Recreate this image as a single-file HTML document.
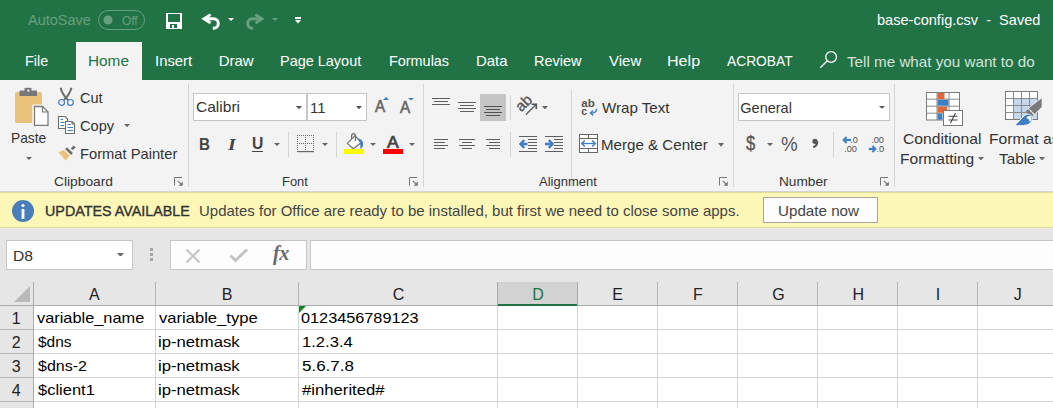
<!DOCTYPE html>
<html><head><meta charset="utf-8"><style>
html,body{margin:0;padding:0;width:1053px;height:408px;overflow:hidden;background:#e6e6e6;position:relative}
body>div,body>svg{position:absolute;white-space:pre;transform-origin:0 0}
body{font-family:"Liberation Sans",sans-serif}
</style></head><body>
<div style="left:0px;top:0px;width:1053px;height:80px;background:#217346;"></div>
<div style="left:76px;top:42px;width:66px;height:38px;background:#f3f3f3;"></div>
<div style="left:0px;top:80px;width:1053px;height:111px;background:#f3f3f3;"></div>
<div style="left:0px;top:191px;width:1053px;height:1px;background:#d4d4d4;"></div>
<div style="left:0px;top:192px;width:1053px;height:1px;background:#e3dc98;"></div>
<div style="left:0px;top:193px;width:1053px;height:34px;background:#fcf7b6;"></div>
<div style="left:0px;top:227px;width:1053px;height:1px;background:#e3dc98;"></div>
<div style="left:0px;top:228px;width:1053px;height:180px;background:#e6e6e6;"></div>
<div style="left:98px;top:10px;width:47px;height:20px;box-sizing:border-box;border:1px solid #66a07e;background:transparent;border-radius:10px"></div>
<svg style="left:103px;top:15px;" width="10" height="10" viewBox="0 0 10 10"><circle cx="5" cy="5" r="4.5" fill="#66a07e"/></svg>
<svg style="left:166px;top:13px;" width="16" height="16" viewBox="0 0 16 16"><rect x="0" y="0" width="16" height="16" fill="#fff"/><rect x="2" y="1" width="12" height="8" fill="#217346"/><rect x="4" y="11" width="7" height="4" fill="#217346"/><rect x="6" y="12" width="2" height="3" fill="#fff"/><rect x="0" y="15" width="16" height="1" fill="#fff"/></svg>
<svg style="left:200px;top:12px;" width="22" height="18" viewBox="0 0 22 18"><path d="M4 6.8H13.6A4.7 4.7 0 0 1 13.6 16.2H12.8" fill="none" stroke="#fff" stroke-width="3"/><path d="M10.6 2.6L3.9 6.8L10.6 11" fill="none" stroke="#fff" stroke-width="2.8"/></svg>
<svg style="left:228px;top:18px;" width="6" height="3" viewBox="0 0 6 3"><path d="M0 0H6L3.0 3Z" fill="#fff"/></svg>
<svg style="left:244px;top:12px;" width="22" height="18" viewBox="0 0 22 18"><path d="M18 6.8H8.4A4.7 4.7 0 0 0 8.4 16.2H9.2" fill="none" stroke="#66a07e" stroke-width="3"/><path d="M11.4 2.6L18.1 6.8L11.4 11" fill="none" stroke="#66a07e" stroke-width="2.8"/></svg>
<svg style="left:272px;top:18px;" width="6" height="3" viewBox="0 0 6 3"><path d="M0 0H6L3.0 3Z" fill="#66a07e"/></svg>
<div style="left:295px;top:17px;width:6px;height:1.5px;background:#fff;"></div>
<svg style="left:295px;top:20px;" width="6" height="3.5" viewBox="0 0 6 3.5"><path d="M0 0H6L3.0 3.5Z" fill="#fff"/></svg>
<svg style="left:818px;top:50px;" width="21" height="20" viewBox="0 0 21 20"><circle cx="13.1" cy="7" r="5.4" fill="none" stroke="#fff" stroke-width="1.3"/><path d="M9.3 10.8L2.3 17.8" stroke="#fff" stroke-width="1.3"/></svg>
<svg style="left:13px;top:86px;" width="40" height="42" viewBox="0 0 40 42"><rect x="2" y="6" width="27" height="31" rx="1.5" fill="#eac27b"/><rect x="6.5" y="4.5" width="17.5" height="5.5" fill="#787878"/><rect x="11.5" y="1.8" width="7" height="4" fill="#787878"/><rect x="14.3" y="3.6" width="2" height="2" fill="#f3f3f3"/><path d="M20 19.3H29.7L36.2 25.8V40.3H20Z" fill="#fff" stroke="#f3f3f3" stroke-width="1.5"/><path d="M21.5 20.5H29.5L35 26V39.3H21.5Z" fill="#fff" stroke="#7a7a7a" stroke-width="1.3"/><path d="M29.5 20.5V26H35" fill="none" stroke="#7a7a7a" stroke-width="1.1"/></svg>
<svg style="left:26px;top:156.5px;" width="6" height="3.0" viewBox="0 0 6 3.0"><path d="M0 0H6L3.0 3.0Z" fill="#666"/></svg>
<svg style="left:58px;top:86px;" width="16" height="21" viewBox="0 0 16 21"><path d="M2.6 1.8C3.6 6.5 6 10.2 10.6 14.6" stroke="#6d6d6d" stroke-width="2" fill="none"/><path d="M13.4 1.8C12.4 6.5 10 10.2 5.4 14.6" stroke="#6d6d6d" stroke-width="2" fill="none"/><circle cx="3.6" cy="16.4" r="2.9" fill="#f3f3f3" stroke="#3f7fc4" stroke-width="1.2"/><circle cx="12.4" cy="16.4" r="2.9" fill="#f3f3f3" stroke="#3f7fc4" stroke-width="1.2"/></svg>
<svg style="left:57px;top:115px;" width="20" height="20" viewBox="0 0 20 20"><path d="M1.5 1.5H8L10.5 4V13.5H1.5Z" fill="#fff" stroke="#6d6d6d" stroke-width="1.1"/><path d="M3.5 4.5H6M3.5 7.5H7.5M3.5 10.5H7" stroke="#3f7fc4" stroke-width="1.1"/><path d="M8.5 6.5H15L17.5 9V18.5H8.5Z" fill="#fff" stroke="#6d6d6d" stroke-width="1.1"/><path d="M15 6.5V9H17.5" fill="none" stroke="#6d6d6d" stroke-width="1"/><path d="M10.5 9.5H13.5M10.5 12.5H16M10.5 15.5H16" stroke="#3f7fc4" stroke-width="1.1"/></svg>
<svg style="left:124px;top:124.2px;" width="6" height="3.200000000000003" viewBox="0 0 6 3.200000000000003"><path d="M0 0H6L3.0 3.200000000000003Z" fill="#666"/></svg>
<svg style="left:57px;top:144px;" width="20" height="17" viewBox="0 0 20 17"><path d="M1.4 8.3L6.8 6.1L13 11.7L8.5 16.4Z" fill="#eac27b"/><path d="M8 5.1L10.3 3.4L15.9 9L14.2 10.9Z" fill="#6d6d6d"/><path d="M13.8 4.4L16.4 1.6L18.8 3.6L15.6 6Z" fill="#6d6d6d"/></svg>
<svg style="left:174px;top:177px;" width="10" height="9" viewBox="0 0 10 9"><path d="M0.5 8.5V0.5H8" fill="none" stroke="#777" stroke-width="1"/><path d="M3.8 3.8L7.5 7.5" stroke="#777" stroke-width="1.1"/><path d="M8.8 4.6V8.8H4.6Z" fill="#777"/></svg>
<div style="left:188px;top:84px;width:1px;height:103px;background:#d5d5d5;"></div>
<div style="left:193px;top:93px;width:114px;height:28px;box-sizing:border-box;border:1px solid #c6c6c6;background:#fff;"></div>
<div style="left:307px;top:93px;width:60px;height:28px;box-sizing:border-box;border:1px solid #c6c6c6;background:#fff;"></div>
<svg style="left:296px;top:105.8px;" width="6" height="3.299999999999997" viewBox="0 0 6 3.299999999999997"><path d="M0 0H6L3.0 3.299999999999997Z" fill="#555"/></svg>
<svg style="left:356px;top:106px;" width="6" height="3.299999999999997" viewBox="0 0 6 3.299999999999997"><path d="M0 0H6L3.0 3.299999999999997Z" fill="#555"/></svg>
<svg style="left:383px;top:97px;" width="6" height="3" viewBox="0 0 6 3"><path d="M0 3H6L3 0Z" fill="#3f7fc4"/></svg>
<svg style="left:408px;top:98.2px;" width="6" height="2.5" viewBox="0 0 6 2.5"><path d="M0 0H6L3.0 2.5Z" fill="#3f7fc4"/></svg>
<div style="left:252px;top:151px;width:10.5px;height:1.2px;background:#444;"></div>
<svg style="left:274px;top:143.2px;" width="6" height="3.1000000000000227" viewBox="0 0 6 3.1000000000000227"><path d="M0 0H6L3.0 3.1000000000000227Z" fill="#666"/></svg>
<div style="left:288px;top:132px;width:1px;height:25px;background:#d5d5d5;"></div>
<svg style="left:297px;top:135px;" width="17" height="18" viewBox="0 0 17 18"><rect x="0" y="0.0" width="1" height="1" fill="#666"/><rect x="2" y="0.0" width="1" height="1" fill="#666"/><rect x="4" y="0.0" width="1" height="1" fill="#666"/><rect x="6" y="0.0" width="1" height="1" fill="#666"/><rect x="8" y="0.0" width="1" height="1" fill="#666"/><rect x="10" y="0.0" width="1" height="1" fill="#666"/><rect x="12" y="0.0" width="1" height="1" fill="#666"/><rect x="14" y="0.0" width="1" height="1" fill="#666"/><rect x="16" y="0.0" width="1" height="1" fill="#666"/><rect x="0" y="8.0" width="1" height="1" fill="#666"/><rect x="2" y="8.0" width="1" height="1" fill="#666"/><rect x="4" y="8.0" width="1" height="1" fill="#666"/><rect x="6" y="8.0" width="1" height="1" fill="#666"/><rect x="8" y="8.0" width="1" height="1" fill="#666"/><rect x="10" y="8.0" width="1" height="1" fill="#666"/><rect x="12" y="8.0" width="1" height="1" fill="#666"/><rect x="14" y="8.0" width="1" height="1" fill="#666"/><rect x="16" y="8.0" width="1" height="1" fill="#666"/><rect x="0.0" y="0" width="1" height="1" fill="#666"/><rect x="0.0" y="2" width="1" height="1" fill="#666"/><rect x="0.0" y="4" width="1" height="1" fill="#666"/><rect x="0.0" y="6" width="1" height="1" fill="#666"/><rect x="0.0" y="8" width="1" height="1" fill="#666"/><rect x="0.0" y="10" width="1" height="1" fill="#666"/><rect x="0.0" y="12" width="1" height="1" fill="#666"/><rect x="0.0" y="14" width="1" height="1" fill="#666"/><rect x="8.0" y="0" width="1" height="1" fill="#666"/><rect x="8.0" y="2" width="1" height="1" fill="#666"/><rect x="8.0" y="4" width="1" height="1" fill="#666"/><rect x="8.0" y="6" width="1" height="1" fill="#666"/><rect x="8.0" y="8" width="1" height="1" fill="#666"/><rect x="8.0" y="10" width="1" height="1" fill="#666"/><rect x="8.0" y="12" width="1" height="1" fill="#666"/><rect x="8.0" y="14" width="1" height="1" fill="#666"/><rect x="16.0" y="0" width="1" height="1" fill="#666"/><rect x="16.0" y="2" width="1" height="1" fill="#666"/><rect x="16.0" y="4" width="1" height="1" fill="#666"/><rect x="16.0" y="6" width="1" height="1" fill="#666"/><rect x="16.0" y="8" width="1" height="1" fill="#666"/><rect x="16.0" y="10" width="1" height="1" fill="#666"/><rect x="16.0" y="12" width="1" height="1" fill="#666"/><rect x="16.0" y="14" width="1" height="1" fill="#666"/><rect x="0" y="16" width="17" height="1.2" fill="#666"/></svg>
<svg style="left:322px;top:142.8px;" width="6" height="3.0999999999999943" viewBox="0 0 6 3.0999999999999943"><path d="M0 0H6L3.0 3.0999999999999943Z" fill="#666"/></svg>
<div style="left:336px;top:132px;width:1px;height:25px;background:#d5d5d5;"></div>
<svg style="left:344px;top:133px;" width="21" height="22" viewBox="0 0 21 22"><path d="M3.3 10.4L11 2.7L17 9.7L9.4 15.8Z" fill="#fff" stroke="#6d6d6d" stroke-width="1.2" stroke-linejoin="round"/><path d="M7.6 6V2.6A1.9 1.9 0 0 1 11.4 2.6V8" fill="none" stroke="#6d6d6d" stroke-width="1.2"/><path d="M13.6 5.6C18 5.8 19.6 9.2 19 12.4C18.6 14.2 17.6 15.2 16.4 15.8C16.6 12.4 16.4 8.4 13.6 5.6Z" fill="#3f7fc4"/><rect x="0" y="16" width="20" height="5" fill="#ffff00"/></svg>
<svg style="left:370px;top:143px;" width="6" height="3" viewBox="0 0 6 3"><path d="M0 0H6L3.0 3Z" fill="#666"/></svg>
<div style="left:383px;top:149px;width:20px;height:5px;background:#ff0000;"></div>
<svg style="left:409px;top:143px;" width="6" height="3" viewBox="0 0 6 3"><path d="M0 0H6L3.0 3Z" fill="#666"/></svg>
<svg style="left:409px;top:177px;" width="10" height="9" viewBox="0 0 10 9"><path d="M0.5 8.5V0.5H8" fill="none" stroke="#777" stroke-width="1"/><path d="M3.8 3.8L7.5 7.5" stroke="#777" stroke-width="1.1"/><path d="M8.8 4.6V8.8H4.6Z" fill="#777"/></svg>
<div style="left:423px;top:84px;width:1px;height:103px;background:#d5d5d5;"></div>
<div style="left:432px;top:98px;width:18px;height:1px;background:#5f5f5f;"></div>
<div style="left:434px;top:101px;width:14px;height:1px;background:#5f5f5f;"></div>
<div style="left:432px;top:104px;width:18px;height:1px;background:#5f5f5f;"></div>
<div style="left:458px;top:102px;width:18px;height:1px;background:#5f5f5f;"></div>
<div style="left:460px;top:105px;width:14px;height:1px;background:#5f5f5f;"></div>
<div style="left:458px;top:108px;width:18px;height:1px;background:#5f5f5f;"></div>
<div style="left:460px;top:111px;width:14px;height:1px;background:#5f5f5f;"></div>
<div style="left:480px;top:94px;width:26px;height:27px;background:#c5c5c5;"></div>
<div style="left:484px;top:106px;width:18px;height:1px;background:#505050;"></div>
<div style="left:486px;top:109px;width:14px;height:1px;background:#505050;"></div>
<div style="left:484px;top:112px;width:18px;height:1px;background:#505050;"></div>
<div style="left:486px;top:115px;width:14px;height:1px;background:#505050;"></div>
<div style="left:510px;top:95px;width:1px;height:25px;background:#d5d5d5;"></div>
<svg style="left:516px;top:96px;" width="24" height="21" viewBox="0 0 24 21"><text x="0" y="0" transform="translate(5.3 16.6) rotate(-45)" font-family="Liberation Sans" font-size="15" font-weight="400" fill="#555" stroke="#555" stroke-width="0.35">ab</text><path d="M10 18.5L20 8.5" stroke="#555" stroke-width="1.3"/><path d="M15.5 8.2H20.3V13" fill="none" stroke="#555" stroke-width="1.6"/></svg>
<svg style="left:542px;top:105.6px;" width="6" height="3.6000000000000085" viewBox="0 0 6 3.6000000000000085"><path d="M0 0H6L3.0 3.6000000000000085Z" fill="#666"/></svg>
<div style="left:571px;top:90px;width:1px;height:97px;background:#d5d5d5;"></div>
<svg style="left:580px;top:98px;" width="20" height="20" viewBox="0 0 20 20"><text x="1.3" y="8.6" font-family="Liberation Sans" font-weight="700" font-size="10.5" fill="#555" textLength="13.5" lengthAdjust="spacingAndGlyphs">ab</text><text x="1.3" y="16.8" font-family="Liberation Sans" font-weight="700" font-size="10.5" fill="#555">c</text><path d="M16.6 10.8C16.8 13.6 14.8 15 10.8 15" fill="none" stroke="#3f7fc4" stroke-width="1.4"/><path d="M13.2 12.4L10.4 15L13.2 17.6" fill="none" stroke="#3f7fc4" stroke-width="1.4"/></svg>
<div style="left:434px;top:139px;width:14px;height:1px;background:#5f5f5f;"></div>
<div style="left:434px;top:142px;width:11px;height:1px;background:#5f5f5f;"></div>
<div style="left:434px;top:145px;width:14px;height:1px;background:#5f5f5f;"></div>
<div style="left:434px;top:148px;width:11px;height:1px;background:#5f5f5f;"></div>
<div style="left:459px;top:139px;width:16px;height:1px;background:#5f5f5f;"></div>
<div style="left:462px;top:142px;width:10px;height:1px;background:#5f5f5f;"></div>
<div style="left:459px;top:145px;width:16px;height:1px;background:#5f5f5f;"></div>
<div style="left:462px;top:148px;width:10px;height:1px;background:#5f5f5f;"></div>
<div style="left:486px;top:139px;width:14px;height:1px;background:#5f5f5f;"></div>
<div style="left:489px;top:142px;width:11px;height:1px;background:#5f5f5f;"></div>
<div style="left:486px;top:145px;width:14px;height:1px;background:#5f5f5f;"></div>
<div style="left:489px;top:148px;width:11px;height:1px;background:#5f5f5f;"></div>
<div style="left:510px;top:132px;width:1px;height:25px;background:#d5d5d5;"></div>
<div style="left:519px;top:136px;width:18px;height:1px;background:#5f5f5f;"></div>
<div style="left:528px;top:139px;width:9px;height:1px;background:#5f5f5f;"></div>
<div style="left:528px;top:142px;width:9px;height:1px;background:#5f5f5f;"></div>
<div style="left:528px;top:145px;width:9px;height:1px;background:#5f5f5f;"></div>
<div style="left:528px;top:148px;width:9px;height:1px;background:#5f5f5f;"></div>
<div style="left:519px;top:151px;width:18px;height:1px;background:#5f5f5f;"></div>
<div style="left:545px;top:136px;width:18px;height:1px;background:#5f5f5f;"></div>
<div style="left:554px;top:139px;width:9px;height:1px;background:#5f5f5f;"></div>
<div style="left:554px;top:142px;width:9px;height:1px;background:#5f5f5f;"></div>
<div style="left:554px;top:145px;width:9px;height:1px;background:#5f5f5f;"></div>
<div style="left:554px;top:148px;width:9px;height:1px;background:#5f5f5f;"></div>
<div style="left:545px;top:151px;width:18px;height:1px;background:#5f5f5f;"></div>
<svg style="left:519px;top:139px;" width="9" height="10" viewBox="0 0 9 10"><path d="M8.5 5H3" stroke="#3f7fc4" stroke-width="2.6"/><path d="M5.2 1.2L1.4 5L5.2 8.8" fill="none" stroke="#3f7fc4" stroke-width="2.4"/></svg>
<svg style="left:545px;top:139px;" width="10" height="10" viewBox="0 0 10 10"><path d="M0 5H6" stroke="#3f7fc4" stroke-width="2.6"/><path d="M3.8 1.2L7.6 5L3.8 8.8" fill="none" stroke="#3f7fc4" stroke-width="2.4"/></svg>
<div style="left:571px;top:132px;width:1px;height:25px;background:#d5d5d5;"></div>
<div style="left:579px;top:134px;width:19px;height:19px;box-sizing:border-box;border:1px solid #666;background:#fff;"></div>
<div style="left:579px;top:138px;width:19px;height:1px;background:#666;"></div>
<div style="left:579px;top:148px;width:19px;height:1px;background:#666;"></div>
<div style="left:588px;top:134px;width:1px;height:4px;background:#666;"></div>
<div style="left:588px;top:148px;width:1px;height:5px;background:#666;"></div>
<svg style="left:580px;top:139px;" width="17" height="9" viewBox="0 0 17 9"><path d="M2.5 4.5H14.5" stroke="#3f7fc4" stroke-width="1.3"/><path d="M4.8 1.5L1.8 4.5L4.8 7.5M12.2 1.5L15.2 4.5L12.2 7.5" fill="none" stroke="#3f7fc4" stroke-width="1.6"/></svg>
<svg style="left:718px;top:143.2px;" width="6" height="3.8000000000000114" viewBox="0 0 6 3.8000000000000114"><path d="M0 0H6L3.0 3.8000000000000114Z" fill="#666"/></svg>
<svg style="left:719px;top:177px;" width="10" height="9" viewBox="0 0 10 9"><path d="M0.5 8.5V0.5H8" fill="none" stroke="#777" stroke-width="1"/><path d="M3.8 3.8L7.5 7.5" stroke="#777" stroke-width="1.1"/><path d="M8.8 4.6V8.8H4.6Z" fill="#777"/></svg>
<div style="left:733px;top:84px;width:1px;height:103px;background:#d5d5d5;"></div>
<div style="left:738px;top:93px;width:152px;height:28px;box-sizing:border-box;border:1px solid #c6c6c6;background:#fff;"></div>
<svg style="left:879px;top:106.4px;" width="6" height="2.799999999999997" viewBox="0 0 6 2.799999999999997"><path d="M0 0H6L3.0 2.799999999999997Z" fill="#555"/></svg>
<svg style="left:767px;top:143.2px;" width="6" height="3.200000000000017" viewBox="0 0 6 3.200000000000017"><path d="M0 0H6L3.0 3.200000000000017Z" fill="#666"/></svg>
<svg style="left:810px;top:138px;" width="10" height="11" viewBox="0 0 10 11"><circle cx="5" cy="3.3" r="2.6" fill="#555"/><path d="M7.3 3.5C7.3 6.5 5.5 8.5 3.2 9.3" fill="none" stroke="#555" stroke-width="2"/></svg>
<div style="left:833px;top:132px;width:1px;height:25px;background:#d5d5d5;"></div>
<svg style="left:840px;top:133px;" width="50" height="22" viewBox="0 0 50 22"><g font-family="Liberation Sans" font-size="9.2" fill="#505050"><text x="10.2" y="10">.0</text><text x="4.2" y="19">.00</text><text x="31.2" y="10">.00</text><text x="36.4" y="19">.0</text></g><path d="M5 7H11" stroke="#3f7fc4" stroke-width="2.2"/><path d="M6.6 4L3.6 7L6.6 10" fill="none" stroke="#3f7fc4" stroke-width="2"/><path d="M28.8 16H34" stroke="#3f7fc4" stroke-width="2.2"/><path d="M32.4 13L35.4 16L32.4 19" fill="none" stroke="#3f7fc4" stroke-width="2"/></svg>
<svg style="left:880px;top:177px;" width="10" height="9" viewBox="0 0 10 9"><path d="M0.5 8.5V0.5H8" fill="none" stroke="#777" stroke-width="1"/><path d="M3.8 3.8L7.5 7.5" stroke="#777" stroke-width="1.1"/><path d="M8.8 4.6V8.8H4.6Z" fill="#777"/></svg>
<div style="left:894px;top:84px;width:1px;height:103px;background:#d5d5d5;"></div>
<svg style="left:926px;top:92px;" width="40" height="36" viewBox="0 0 40 36"><rect x="0.5" y="0.5" width="33" height="27.5" fill="#fff" stroke="#7a7a7a" stroke-width="1"/><path d="M11 0.5V28M23 0.5V28M0.5 7.2H33.5M0.5 14.2H33.5M0.5 21.2H33.5" stroke="#8a8a8a" stroke-width="1"/><rect x="11.5" y="1" width="7" height="6" fill="#e0663c"/><rect x="11.5" y="7.7" width="11" height="6" fill="#3f7fc4"/><rect x="11.5" y="14.7" width="9.5" height="6" fill="#e0663c"/><rect x="11.5" y="21.7" width="5" height="6" fill="#3f7fc4"/><rect x="17.5" y="18.5" width="19" height="15" fill="#fff" stroke="#7a7a7a" stroke-width="1"/><path d="M22.5 24.2H31.5M22.5 28H31.5M29.5 21L24.5 31" stroke="#444" stroke-width="1.1"/></svg>
<svg style="left:1005px;top:91px;" width="42" height="36" viewBox="0 0 42 36"><rect x="0.5" y="0.5" width="32" height="28" fill="#fff" stroke="#7a7a7a" stroke-width="1"/><rect x="9" y="7.5" width="23" height="20.5" fill="#c5d7ec"/><path d="M8.5 0.5V28.5M16.5 0.5V28.5M24.5 0.5V28.5M0.5 7.5H32.5M0.5 14.5H32.5M0.5 21.5H32.5" stroke="#8a8a8a" stroke-width="1"/><path d="M37.2 6V16.6L29.6 24.2L22.6 17.2Z" fill="#f3f3f3"/><path d="M36.7 7.2V16L29.6 23.1L23.8 17.3Z" fill="#7a7a7a"/><path d="M23 18.3L28.6 23.9L26.2 26.3L20.6 20.7Z" fill="#7a7a7a"/><path d="M9.6 34.6L19 25C21.5 22.5 26 22.5 27 26C28 29.5 25.5 33 21.5 34C17.5 34.8 13.5 34.7 9.6 34.6Z" fill="#3f7fc4" stroke="#f3f3f3" stroke-width="1"/><path d="M21.3 27.2C22.4 24.8 25.4 24.4 26.3 26.4C26.8 28 25.9 30.2 24.4 30.9C24.9 28.9 23.4 27.3 21.3 27.2Z" fill="#fff"/></svg>
<svg style="left:978px;top:156.8px;" width="6" height="3.3999999999999773" viewBox="0 0 6 3.3999999999999773"><path d="M0 0H6L3.0 3.3999999999999773Z" fill="#666"/></svg>
<svg style="left:1039px;top:156.8px;" width="6" height="3.3999999999999773" viewBox="0 0 6 3.3999999999999773"><path d="M0 0H6L3.0 3.3999999999999773Z" fill="#666"/></svg>
<svg style="left:12px;top:200px;" width="22" height="22" viewBox="0 0 22 22"><circle cx="11" cy="11" r="11" fill="#4a7ebb"/><rect x="9.6" y="9" width="2.8" height="10" fill="#fff"/><circle cx="11" cy="5.5" r="1.6" fill="#fff"/></svg>
<div style="left:763px;top:197px;width:115px;height:26px;box-sizing:border-box;border:1px solid #a6a6a6;background:#fdfdfd;"></div>
<div style="left:6px;top:240px;width:127px;height:30px;box-sizing:border-box;border:1px solid #c6c6c6;background:#fff;"></div>
<svg style="left:117px;top:252.6px;" width="7" height="3.799999999999983" viewBox="0 0 7 3.799999999999983"><path d="M0 0H7L3.5 3.799999999999983Z" fill="#666"/></svg>
<div style="left:150px;top:248px;width:3px;height:3px;background:#a6a6a6;"></div>
<div style="left:150px;top:253px;width:3px;height:3px;background:#a6a6a6;"></div>
<div style="left:150px;top:258px;width:3px;height:3px;background:#a6a6a6;"></div>
<div style="left:170px;top:240px;width:137px;height:30px;box-sizing:border-box;border:1px solid #c6c6c6;background:#fdfdfd;"></div>
<svg style="left:185px;top:248px;" width="16" height="16" viewBox="0 0 16 16"><path d="M1.5 1.5L14.5 14.5M14.5 1.5L1.5 14.5" stroke="#c4c4c4" stroke-width="2"/></svg>
<svg style="left:229px;top:247px;" width="20" height="17" viewBox="0 0 20 17"><path d="M1.5 8.5L6.5 13.5L18 2.5" fill="none" stroke="#c4c4c4" stroke-width="3"/></svg>
<div style="left:273px;top:243px;font-family:'Liberation Serif';font-style:italic;font-weight:700;font-size:20px;line-height:20px;color:#6a6a6a;white-space:pre;letter-spacing:-0.5px">fx</div>
<div style="left:310px;top:240px;width:750px;height:30px;box-sizing:border-box;border:1px solid #c6c6c6;background:#fdfdfd;"></div>
<div style="left:0px;top:282px;width:1053px;height:23px;background:#e6e6e6;"></div>
<svg style="left:14px;top:286px;" width="17" height="16" viewBox="0 0 17 16"><path d="M16 0V16H0Z" fill="#b9b9b9"/></svg>
<div style="left:0px;top:305px;width:1053px;height:1px;background:#ababab;"></div>
<div style="left:34px;top:306px;width:1019px;height:102px;background:#ffffff;"></div>
<div style="left:0px;top:306px;width:33px;height:102px;background:#e6e6e6;"></div>
<div style="left:498px;top:282px;width:79px;height:23px;background:#d2d2d2;"></div>
<div style="left:155px;top:306px;width:1px;height:102px;background:#d4d4d4;"></div>
<div style="left:298px;top:306px;width:1px;height:102px;background:#d4d4d4;"></div>
<div style="left:497px;top:306px;width:1px;height:102px;background:#d4d4d4;"></div>
<div style="left:577px;top:306px;width:1px;height:102px;background:#d4d4d4;"></div>
<div style="left:657px;top:306px;width:1px;height:102px;background:#d4d4d4;"></div>
<div style="left:737px;top:306px;width:1px;height:102px;background:#d4d4d4;"></div>
<div style="left:817px;top:306px;width:1px;height:102px;background:#d4d4d4;"></div>
<div style="left:897px;top:306px;width:1px;height:102px;background:#d4d4d4;"></div>
<div style="left:977px;top:306px;width:1px;height:102px;background:#d4d4d4;"></div>
<div style="left:34px;top:329px;width:1019px;height:1px;background:#d4d4d4;"></div>
<div style="left:0px;top:329px;width:33px;height:1px;background:#b4b4b4;"></div>
<div style="left:34px;top:353px;width:1019px;height:1px;background:#d4d4d4;"></div>
<div style="left:0px;top:353px;width:33px;height:1px;background:#b4b4b4;"></div>
<div style="left:34px;top:377px;width:1019px;height:1px;background:#d4d4d4;"></div>
<div style="left:0px;top:377px;width:33px;height:1px;background:#b4b4b4;"></div>
<div style="left:34px;top:401px;width:1019px;height:1px;background:#d4d4d4;"></div>
<div style="left:0px;top:401px;width:33px;height:1px;background:#b4b4b4;"></div>
<div style="left:33px;top:282px;width:1px;height:126px;background:#ababab;"></div>
<div style="left:155px;top:282px;width:1px;height:23px;background:#b4b4b4;"></div>
<div style="left:298px;top:282px;width:1px;height:23px;background:#b4b4b4;"></div>
<div style="left:497px;top:282px;width:1px;height:23px;background:#b4b4b4;"></div>
<div style="left:577px;top:282px;width:1px;height:23px;background:#b4b4b4;"></div>
<div style="left:657px;top:282px;width:1px;height:23px;background:#b4b4b4;"></div>
<div style="left:737px;top:282px;width:1px;height:23px;background:#b4b4b4;"></div>
<div style="left:817px;top:282px;width:1px;height:23px;background:#b4b4b4;"></div>
<div style="left:897px;top:282px;width:1px;height:23px;background:#b4b4b4;"></div>
<div style="left:977px;top:282px;width:1px;height:23px;background:#b4b4b4;"></div>
<div style="left:498px;top:304px;width:79px;height:2px;background:#217346;"></div>
<div style="left:497px;top:282px;width:1px;height:24px;background:#a8a8a8;"></div>
<div style="left:577px;top:282px;width:1px;height:24px;background:#a8a8a8;"></div>
<svg style="left:299px;top:306px;" width="8" height="8" viewBox="0 0 8 8"><path d="M0 0H7L0 7Z" fill="#108a1e"/></svg>
<div style="left:28.40px;top:13px;font-family:'Liberation Sans';font-size:14px;line-height:14px;font-weight:400;font-style:normal;color:#66a07e;transform:scaleX(1.0367);">AutoSave</div>
<div style="left:121.50px;top:15px;font-family:'Liberation Sans';font-size:12px;line-height:12px;font-weight:400;font-style:normal;color:#66a07e;transform:scaleX(0.9875);">Off</div>
<div style="left:877.03px;top:12px;font-family:'Liberation Sans';font-size:15px;line-height:15px;font-weight:400;font-style:normal;color:#ffffff;transform:scaleX(0.9701);">base-config.csv  -  Saved</div>
<div style="left:24.84px;top:53px;font-family:'Liberation Sans';font-size:15px;line-height:15px;font-weight:400;font-style:normal;color:#ffffff;transform:scaleX(0.9565);">File</div>
<div style="left:87.58px;top:53px;font-family:'Liberation Sans';font-size:15px;line-height:15px;font-weight:400;font-style:normal;color:#217346;transform:scaleX(1.0231);">Home</div>
<div style="left:155.31px;top:53px;font-family:'Liberation Sans';font-size:15px;line-height:15px;font-weight:400;font-style:normal;color:#ffffff;transform:scaleX(0.9917);">Insert</div>
<div style="left:218.70px;top:53px;font-family:'Liberation Sans';font-size:15px;line-height:15px;font-weight:400;font-style:normal;color:#ffffff;">Draw</div>
<div style="left:280.44px;top:53px;font-family:'Liberation Sans';font-size:15px;line-height:15px;font-weight:400;font-style:normal;color:#ffffff;transform:scaleX(0.9639);">Page Layout</div>
<div style="left:389.04px;top:53px;font-family:'Liberation Sans';font-size:15px;line-height:15px;font-weight:400;font-style:normal;color:#ffffff;transform:scaleX(0.9607);">Formulas</div>
<div style="left:475.60px;top:53px;font-family:'Liberation Sans';font-size:15px;line-height:15px;font-weight:400;font-style:normal;color:#ffffff;transform:scaleX(0.9968);">Data</div>
<div style="left:534.44px;top:53px;font-family:'Liberation Sans';font-size:15px;line-height:15px;font-weight:400;font-style:normal;color:#ffffff;transform:scaleX(0.9646);">Review</div>
<div style="left:609.00px;top:53px;font-family:'Liberation Sans';font-size:15px;line-height:15px;font-weight:400;font-style:normal;color:#ffffff;">View</div>
<div style="left:667.33px;top:53px;font-family:'Liberation Sans';font-size:15px;line-height:15px;font-weight:400;font-style:normal;color:#ffffff;transform:scaleX(1.0724);">Help</div>
<div style="left:727.40px;top:53px;font-family:'Liberation Sans';font-size:15px;line-height:15px;font-weight:400;font-style:normal;color:#ffffff;transform:scaleX(0.9183);">ACROBAT</div>
<div style="left:846.90px;top:54px;font-family:'Liberation Sans';font-size:15px;line-height:15px;font-weight:400;font-style:normal;color:#d3e3d9;transform:scaleX(1.0135);">Tell me what you want to do</div>
<div style="left:10.58px;top:130px;font-family:'Liberation Sans';font-size:15px;line-height:15px;font-weight:400;font-style:normal;color:#333333;transform:scaleX(0.9189);">Paste</div>
<div style="left:79.73px;top:90px;font-family:'Liberation Sans';font-size:15px;line-height:15px;font-weight:400;font-style:normal;color:#333333;transform:scaleX(0.9682);">Cut</div>
<div style="left:79.63px;top:118px;font-family:'Liberation Sans';font-size:15px;line-height:15px;font-weight:400;font-style:normal;color:#333333;transform:scaleX(0.9735);">Copy</div>
<div style="left:79.62px;top:146px;font-family:'Liberation Sans';font-size:15px;line-height:15px;font-weight:400;font-style:normal;color:#333333;transform:scaleX(0.9806);">Format Painter</div>
<div style="left:54.34px;top:175px;font-family:'Liberation Sans';font-size:13px;line-height:13px;font-weight:400;font-style:normal;color:#333333;transform:scaleX(1.0611);">Clipboard</div>
<div style="left:195.53px;top:100px;font-family:'Liberation Sans';font-size:14.5px;line-height:14.5px;font-weight:400;font-style:normal;color:#333333;transform:scaleX(1.0718);">Calibri</div>
<div style="left:309.87px;top:101px;font-family:'Liberation Sans';font-size:14.5px;line-height:14.5px;font-weight:400;font-style:normal;color:#333333;transform:scaleX(1.0286);">11</div>
<div style="left:282.21px;top:175px;font-family:'Liberation Sans';font-size:13px;line-height:13px;font-weight:400;font-style:normal;color:#333333;transform:scaleX(0.9920);">Font</div>
<div style="left:602.30px;top:100px;font-family:'Liberation Sans';font-size:15px;line-height:15px;font-weight:400;font-style:normal;color:#333333;transform:scaleX(1.0075);">Wrap Text</div>
<div style="left:601.29px;top:137px;font-family:'Liberation Sans';font-size:15px;line-height:15px;font-weight:400;font-style:normal;color:#333333;transform:scaleX(1.0076);">Merge &amp; Center</div>
<div style="left:539.00px;top:175px;font-family:'Liberation Sans';font-size:13px;line-height:13px;font-weight:400;font-style:normal;color:#333333;">Alignment</div>
<div style="left:740.30px;top:101px;font-family:'Liberation Sans';font-size:14.5px;line-height:14.5px;font-weight:400;font-style:normal;color:#333333;">General</div>
<div style="left:779.45px;top:175px;font-family:'Liberation Sans';font-size:13px;line-height:13px;font-weight:400;font-style:normal;color:#333333;transform:scaleX(1.0511);">Number</div>
<div style="left:903.25px;top:131px;font-family:'Liberation Sans';font-size:15px;line-height:15px;font-weight:400;font-style:normal;color:#333333;transform:scaleX(1.0452);">Conditional</div>
<div style="left:900.26px;top:151px;font-family:'Liberation Sans';font-size:15px;line-height:15px;font-weight:400;font-style:normal;color:#333333;transform:scaleX(1.0357);">Formatting</div>
<div style="left:988.56px;top:131px;font-family:'Liberation Sans';font-size:15px;line-height:15px;font-weight:400;font-style:normal;color:#333333;transform:scaleX(1.0439);">Format as</div>
<div style="left:998.60px;top:151px;font-family:'Liberation Sans';font-size:15px;line-height:15px;font-weight:400;font-style:normal;color:#333333;transform:scaleX(1.0200);">Table</div>
<div style="left:199.45px;top:137px;font-family:'Liberation Sans';font-size:16px;line-height:16px;font-weight:700;font-style:normal;color:#444444;transform:scaleX(0.9500);">B</div>
<div style="left:228.10px;top:137px;font-family:'Liberation Serif';font-size:16px;line-height:16px;font-weight:700;font-style:italic;color:#444444;transform:scaleX(1.2429);">I</div>
<div style="left:251.52px;top:136px;font-family:'Liberation Sans';font-size:16px;line-height:16px;font-weight:700;font-style:normal;color:#444444;transform:scaleX(0.9800);">U</div>
<div style="left:375.20px;top:99px;font-family:'Liberation Sans';font-size:16px;line-height:16px;font-weight:400;font-style:normal;color:#666666;transform:scaleX(0.9455);-webkit-text-stroke:0.6px #666">A</div>
<div style="left:400.10px;top:100px;font-family:'Liberation Sans';font-size:16px;line-height:16px;font-weight:400;font-style:normal;color:#666666;transform:scaleX(0.9545);-webkit-text-stroke:0.6px #666">A</div>
<div style="left:386.90px;top:134px;font-family:'Liberation Sans';font-size:17px;line-height:17px;font-weight:400;font-style:normal;color:#444444;transform:scaleX(1.0333);-webkit-text-stroke:0.7px #444">A</div>
<div style="left:746.00px;top:132px;font-family:'Liberation Sans';font-size:21px;line-height:21px;font-weight:400;font-style:normal;color:#555555;transform:scaleX(0.7917);-webkit-text-stroke:0.3px #555">$</div>
<div style="left:781.26px;top:134px;font-family:'Liberation Sans';font-size:20px;line-height:20px;font-weight:400;font-style:normal;color:#555555;transform:scaleX(0.9375);">%</div>
<div style="left:45.48px;top:204px;font-family:'Liberation Sans';font-size:14px;line-height:14px;font-weight:400;font-style:normal;color:#333333;transform:scaleX(1.0221);-webkit-text-stroke:0.35px #333">UPDATES AVAILABLE</div>
<div style="left:199.47px;top:204px;font-family:'Liberation Sans';font-size:14.5px;line-height:14.5px;font-weight:400;font-style:normal;color:#444444;transform:scaleX(1.0340);">Updates for Office are ready to be installed, but first we need to close some apps.</div>
<div style="left:778.35px;top:204px;font-family:'Liberation Sans';font-size:14.5px;line-height:14.5px;font-weight:400;font-style:normal;color:#444444;transform:scaleX(1.0468);">Update now</div>
<div style="left:12.96px;top:248px;font-family:'Liberation Sans';font-size:15px;line-height:15px;font-weight:400;font-style:normal;color:#333333;transform:scaleX(1.0417);">D8</div>
<div style="left:89.05px;top:287px;font-family:'Liberation Sans';font-size:16px;line-height:16px;font-weight:400;font-style:normal;color:#222222;">A</div>
<div style="left:221.85px;top:287px;font-family:'Liberation Sans';font-size:16px;line-height:16px;font-weight:400;font-style:normal;color:#222222;">B</div>
<div style="left:392.80px;top:287px;font-family:'Liberation Sans';font-size:16px;line-height:16px;font-weight:400;font-style:normal;color:#222222;">C</div>
<div style="left:532.30px;top:287px;font-family:'Liberation Sans';font-size:16px;line-height:16px;font-weight:400;font-style:normal;color:#217346;">D</div>
<div style="left:612.30px;top:287px;font-family:'Liberation Sans';font-size:16px;line-height:16px;font-weight:400;font-style:normal;color:#222222;">E</div>
<div style="left:692.90px;top:287px;font-family:'Liberation Sans';font-size:16px;line-height:16px;font-weight:400;font-style:normal;color:#222222;">F</div>
<div style="left:772.20px;top:287px;font-family:'Liberation Sans';font-size:16px;line-height:16px;font-weight:400;font-style:normal;color:#222222;">G</div>
<div style="left:852.45px;top:287px;font-family:'Liberation Sans';font-size:16px;line-height:16px;font-weight:400;font-style:normal;color:#222222;">H</div>
<div style="left:935.80px;top:287px;font-family:'Liberation Sans';font-size:16px;line-height:16px;font-weight:400;font-style:normal;color:#222222;">I</div>
<div style="left:1013.85px;top:287px;font-family:'Liberation Sans';font-size:16px;line-height:16px;font-weight:400;font-style:normal;color:#222222;">J</div>
<div style="left:11.85px;top:311px;font-family:'Liberation Sans';font-size:16px;line-height:16px;font-weight:400;font-style:normal;color:#222222;">1</div>
<div style="left:11.85px;top:335px;font-family:'Liberation Sans';font-size:16px;line-height:16px;font-weight:400;font-style:normal;color:#222222;">2</div>
<div style="left:11.85px;top:359px;font-family:'Liberation Sans';font-size:16px;line-height:16px;font-weight:400;font-style:normal;color:#222222;">3</div>
<div style="left:11.85px;top:383px;font-family:'Liberation Sans';font-size:16px;line-height:16px;font-weight:400;font-style:normal;color:#222222;">4</div>
<div style="left:37.40px;top:310px;font-family:'Liberation Sans';font-size:15px;line-height:15px;font-weight:400;font-style:normal;color:#000000;transform:scaleX(1.0898);">variable_name</div>
<div style="left:159.30px;top:310px;font-family:'Liberation Sans';font-size:15px;line-height:15px;font-weight:400;font-style:normal;color:#000000;transform:scaleX(1.1056);">variable_type</div>
<div style="left:301.02px;top:310px;font-family:'Liberation Sans';font-size:15px;line-height:15px;font-weight:400;font-style:normal;color:#000000;transform:scaleX(1.0841);">0123456789123</div>
<div style="left:37.70px;top:334px;font-family:'Liberation Sans';font-size:15px;line-height:15px;font-weight:400;font-style:normal;color:#000000;transform:scaleX(1.0312);">$dns</div>
<div style="left:158.29px;top:334px;font-family:'Liberation Sans';font-size:15px;line-height:15px;font-weight:400;font-style:normal;color:#000000;transform:scaleX(1.1125);">ip-netmask</div>
<div style="left:301.59px;top:334px;font-family:'Liberation Sans';font-size:15px;line-height:15px;font-weight:400;font-style:normal;color:#000000;transform:scaleX(1.1067);">1.2.3.4</div>
<div style="left:37.70px;top:358px;font-family:'Liberation Sans';font-size:15px;line-height:15px;font-weight:400;font-style:normal;color:#000000;transform:scaleX(1.0667);">$dns-2</div>
<div style="left:158.29px;top:358px;font-family:'Liberation Sans';font-size:15px;line-height:15px;font-weight:400;font-style:normal;color:#000000;transform:scaleX(1.1125);">ip-netmask</div>
<div style="left:301.57px;top:358px;font-family:'Liberation Sans';font-size:15px;line-height:15px;font-weight:400;font-style:normal;color:#000000;transform:scaleX(1.1318);">5.6.7.8</div>
<div style="left:37.70px;top:382px;font-family:'Liberation Sans';font-size:15px;line-height:15px;font-weight:400;font-style:normal;color:#000000;transform:scaleX(1.1000);">$client1</div>
<div style="left:158.29px;top:382px;font-family:'Liberation Sans';font-size:15px;line-height:15px;font-weight:400;font-style:normal;color:#000000;transform:scaleX(1.1125);">ip-netmask</div>
<div style="left:302.20px;top:382px;font-family:'Liberation Sans';font-size:15px;line-height:15px;font-weight:400;font-style:normal;color:#000000;transform:scaleX(1.1122);">#inherited#</div>
</body></html>
